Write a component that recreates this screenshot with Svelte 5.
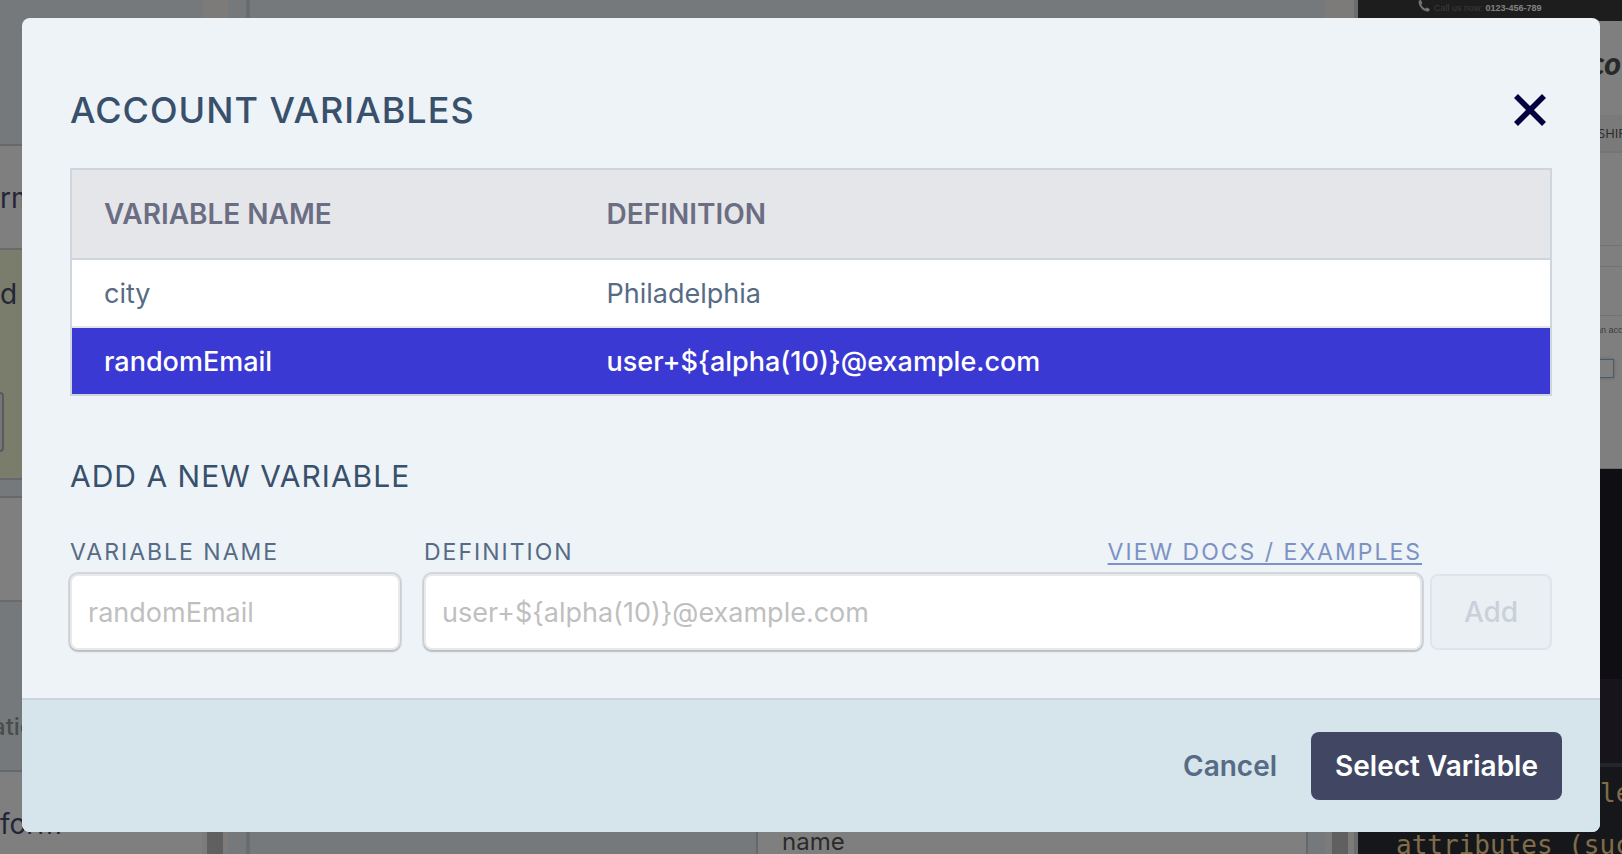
<script lang="ts">
	interface Variable {
		name: string;
		definition: string;
	}

	let variables = $state<Variable[]>([
		{ name: 'city', definition: 'Philadelphia' },
		{ name: 'randomEmail', definition: 'user+${alpha(10)}@example.com' }
	]);
	let selected = $state('randomEmail');
	let open = $state(true);
	let newName = $state('');
	let newDefinition = $state('');

	const canAdd = $derived(newName.trim() !== '' && newDefinition.trim() !== '');

	function addVariable(e: SubmitEvent) {
		e.preventDefault();
		if (!canAdd) return;
		variables.push({ name: newName.trim(), definition: newDefinition.trim() });
		selected = newName.trim();
		newName = '';
		newDefinition = '';
	}

	function close() {
		open = false;
	}
</script>

<div class="page">
	<!-- Editor behind the modal -->
	<div class="editor" aria-hidden="true">
		<div class="steps">
			<div class="step-head"></div>
			<div class="step">rm</div>
			<div class="step active">
				<span>d</span>
				<div class="step-field"></div>
			</div>
			<div class="step-gap"></div>
			<div class="step"></div>
			<div class="step-note">ation</div>
			<div class="step last">form</div>
		</div>
		<div class="scroll-lane"><div class="thumb"></div></div>
		<div class="gutter"></div>
		<div class="canvas">
			<div class="canvas-card">name</div>
		</div>
		<div class="scroll-lane right"><div class="thumb"></div></div>
		<div class="preview">
			<div class="shop-top">
				<svg width="12" height="12" viewBox="0 0 12 12">
					<path d="M1 0.5 L3 0 L4.4 3.2 L3.2 4.4 C3.8 6.2 5.4 8 7.4 8.7 L8.7 7.5 L11.7 9 L11.2 11 C9.8 12.2 6.4 11.4 3.8 8.8 C1 6 0 2.6 1 0.5 Z" fill="#e8e8e8" />
				</svg>
				<span>Call us now: <b>0123-456-789</b></span>
			</div>
			<div class="shop-logo">co</div>
			<div class="shop-nav">SHIRTS</div>
			<div class="shop-row tall"></div>
			<div class="shop-row"></div>
			<div class="shop-row mid"></div>
			<div class="shop-form">
				<span>an account</span>
				<div class="shop-input"></div>
			</div>
			<div class="console"></div>
			<div class="console-tabs"></div>
			<div class="code">
				<div class="code-line indent">le</div>
				<div class="code-line">attributes (such</div>
			</div>
		</div>
	</div>
	<div class="overlay"></div>

	{#if open}
		<div class="modal" role="dialog" aria-modal="true" aria-labelledby="modal-title">
			<div class="modal-body">
				<header class="modal-header">
					<h1 id="modal-title">ACCOUNT VARIABLES</h1>
					<button class="close-btn" type="button" aria-label="Close" onclick={close}>
						<svg width="34" height="34" viewBox="0 0 34 34">
							<path d="M3 3 L31 31 M31 3 L3 31" stroke="#03003f" stroke-width="5.6" fill="none" />
						</svg>
					</button>
				</header>

				<table class="var-table">
					<thead>
						<tr>
							<th class="col-name">VARIABLE NAME</th>
							<th>DEFINITION</th>
						</tr>
					</thead>
					<tbody>
						{#each variables as variable (variable.name)}
							<tr class:selected={variable.name === selected} onclick={() => (selected = variable.name)}>
								<td>{variable.name}</td>
								<td>{variable.definition}</td>
							</tr>
						{/each}
					</tbody>
				</table>

				<h2>ADD A NEW VARIABLE</h2>

				<form class="add-form" onsubmit={addVariable}>
					<div class="field name-field">
						<label for="var-name">VARIABLE NAME</label>
						<input id="var-name" type="text" placeholder="randomEmail" bind:value={newName} />
					</div>
					<div class="field definition-field">
						<div class="label-row">
							<label for="var-definition">DEFINITION</label>
							<a href="#docs">VIEW DOCS / EXAMPLES</a>
						</div>
						<input
							id="var-definition"
							type="text"
							placeholder={'user+${alpha(10)}@example.com'}
							bind:value={newDefinition}
						/>
					</div>
					<button class="add-btn" type="submit" disabled={!canAdd}>Add</button>
				</form>
			</div>

			<footer class="modal-footer">
				<button class="cancel-btn" type="button" onclick={close}>Cancel</button>
				<button class="select-btn" type="button" onclick={close}>Select Variable</button>
			</footer>
		</div>
	{/if}
</div>

<style>
	:global(body) {
		background: #7f7f7f;
	}

	.page {
		position: relative;
		min-height: 100vh;
		box-sizing: border-box;
		padding: 18px 22px 22px;
		overflow: hidden;
		font-family: Inter, 'Liberation Sans', sans-serif;
	}

	.page * {
		box-sizing: border-box;
	}

	/* Editor */
	.editor {
		position: absolute;
		inset: 0;
		display: grid;
		grid-template-columns: 202px 26px 22px 1fr 33px 264px;
		grid-template-rows: 100%;
		background: #eaf2f6;
		overflow: hidden;
	}

	.overlay {
		position: absolute;
		inset: 0;
		background: rgba(0, 0, 0, 0.5);
	}

	.steps {
		display: flex;
		flex-direction: column;
		min-width: 0;
		font-size: 28px;
		color: #484c70;
	}

	.step-head {
		height: 146px;
		border-bottom: 2px solid #ccd3d8;
	}

	.step {
		height: 104px;
		background: #fff;
		border-bottom: 2px solid #d5d5d5;
		line-height: 104px;
	}

	.step.active {
		height: 230px;
		background: #f7fbd8;
		border-color: #ccd3d8;
		line-height: 88px;
	}

	.step-field {
		width: 4px;
		height: 60px;
		margin-top: 54px;
		background: #ecebf2;
		border: 2px solid #b4b4b4;
		border-left: 0;
		border-radius: 0 6px 6px 0;
	}

	.step.active span {
		display: block;
		height: 88px;
	}

	.step-gap {
		height: 18px;
		border-bottom: 2px solid #ccd3d8;
	}

	.step-note {
		height: 170px;
		padding-top: 110px;
		border-bottom: 2px solid #ccd3d8;
		font-size: 24px;
		font-weight: 500;
		line-height: 30px;
		text-indent: -8px;
		color: #94999c;
	}

	.step.last {
		flex: 1;
		min-height: 0;
		border: 0;
	}

	.scroll-lane {
		display: flex;
		align-items: flex-end;
		justify-content: center;
		background: #faf6f4;
	}

	.thumb {
		width: 16px;
		height: 50%;
		background: #c0c0c0;
	}

	.gutter {
		border-right: 4px solid #d4dade;
	}

	.canvas {
		display: flex;
		flex-direction: column;
		justify-content: flex-end;
		align-items: flex-end;
		padding-right: 17px;
	}

	.canvas-card {
		width: 552px;
		padding: 44px 24px 0;
		background: #fff;
		border: 2px solid #ccd3d8;
		border-width: 0 2px;
		font-size: 24px;
		line-height: 24px;
		color: #565656;
	}

	.scroll-lane.right {
		border-right: 4px solid #d4dade;
	}

	.preview {
		display: flex;
		flex-direction: column;
		background: #fff;
		overflow: hidden;
	}

	.shop-top {
		display: flex;
		gap: 4px;
		height: 21px;
		padding-left: 60px;
		background: #3a3a3a;
		font: 9px/16px 'Liberation Sans', sans-serif;
		color: #777;
	}

	.shop-top b {
		color: #fff;
	}

	.shop-logo {
		height: 94px;
		padding: 22px 0 0 232px;
		font: italic 900 32px/40px Lato, sans-serif;
		color: #505050;
	}

	.shop-nav {
		height: 38px;
		padding-left: 240px;
		background: #f4f4f4;
		border-bottom: 2px solid #ebebeb;
		font: 500 13px/36px 'Open Sans', sans-serif;
		color: #505050;
	}

	.shop-row {
		height: 21px;
		border-bottom: 1px solid #e4e4e4;
	}

	.shop-row.tall {
		height: 93px;
	}

	.shop-row.mid {
		height: 49px;
	}

	.shop-form {
		height: 153px;
		padding-top: 8px;
		border-bottom: 1px solid #d5d5d5;
		font: 9px/12px 'Liberation Sans', sans-serif;
		color: #777;
	}

	.shop-form span {
		display: block;
		padding-left: 238px;
		white-space: nowrap;
	}

	.shop-input {
		width: 256px;
		height: 19px;
		margin-top: 23px;
		border: 1px solid #98b4ca;
		box-shadow: 0 0 4px #b8cad8;
	}

	.console {
		height: 210px;
		background: #1e1c26;
	}

	.console-tabs {
		height: 88px;
		background: #2e2836;
		border-bottom: 4px solid #464a54;
	}

	.code {
		flex: 1;
		min-height: 0;
		background: #2a2f36;
		font: 26px/52px 'DejaVu Sans Mono', monospace;
		color: #ffda94;
	}

	.code-line {
		padding-left: 38px;
		white-space: pre;
	}

	.code-line.indent {
		padding-left: 242px;
	}

	/* Modal */
	.modal {
		position: relative;
		border-radius: 8px;
		overflow: hidden;
		background: #edf3f7;
		color: #566b85;
	}

	.modal-body {
		padding: 64px 48px 48px;
	}

	.modal-header {
		display: flex;
		align-items: center;
		justify-content: space-between;
		margin-bottom: 30px;
		padding-right: 5px;
	}

	h1,
	h2 {
		margin: 0;
		font-weight: 500;
		color: #38506b;
	}

	h1 {
		font-size: 36px;
		line-height: 56px;
		letter-spacing: 1px;
	}

	h2 {
		margin: 60px 0 40px;
		font-size: 30px;
		line-height: 40px;
		font-weight: 400;
		letter-spacing: 1px;
	}

	button {
		margin: 0;
		font-family: inherit;
		font-size: 28px;
		cursor: pointer;
	}

	.close-btn {
		display: flex;
		padding: 0;
		background: none;
		border: 0;
	}

	.var-table {
		width: 100%;
		table-layout: fixed;
		border-collapse: separate;
		border-spacing: 0;
		border: 2px solid #cfd5dc;
		background: #fff;
		font-size: 27px;
		line-height: 34px;
	}

	.var-table th {
		height: 90px;
		padding: 0 32px;
		background: #e5e6ea;
		border-bottom: 2px solid #cfd5dc;
		text-align: left;
		font-size: 28px;
		font-weight: 600;
		color: #6b6e83;
	}

	.var-table .col-name {
		width: 34%;
	}

	.var-table td {
		height: 68px;
		padding: 2px 32px 0;
		border-bottom: 2px solid #e5e6ea;
		cursor: pointer;
	}

	.var-table tbody tr:last-child td {
		height: 66px;
		border-bottom: 0;
	}

	.var-table .selected td {
		background: #3b39d3;
		font-weight: 500;
		color: #fff;
	}

	.add-form {
		display: flex;
		align-items: flex-end;
	}

	.field {
		display: flex;
		flex-direction: column;
		gap: 6px;
		min-width: 0;
	}

	.name-field {
		flex: 0 0 330px;
		margin-right: 24px;
	}

	.definition-field {
		flex: 1;
		margin-right: 8px;
	}

	.label-row {
		display: flex;
		justify-content: space-between;
	}

	label,
	.label-row a {
		font-size: 23px;
		line-height: 32px;
		letter-spacing: 2px;
	}

	.label-row a {
		color: #7d92c4;
		text-decoration-thickness: 2px;
		text-underline-offset: 3px;
		text-decoration-skip-ink: none;
	}

	input {
		width: 100%;
		height: 76px;
		padding: 0 16px;
		background: #fff;
		border: 2px solid #e9e9e9;
		border-radius: 8px;
		box-shadow:
			0 0 0 2px rgba(60, 66, 87, 0.16),
			0 2px 2px rgba(0, 0, 0, 0.12);
		outline: none;
		font-family: inherit;
		font-size: 27px;
		color: #566b85;
	}

	input::placeholder {
		color: #bfbfbf;
		opacity: 1;
	}

	.add-btn {
		width: 122px;
		height: 76px;
		background: #e9eff3;
		border: 2px solid #dfe4eb;
		border-radius: 8px;
		font-weight: 500;
		color: #566b85;
	}

	.add-btn:disabled {
		color: #c8d1da;
		cursor: default;
	}

	.modal-footer {
		display: flex;
		justify-content: flex-end;
		gap: 10px;
		padding: 32px 38px;
		background: #d6e4ec;
		border-top: 2px solid #cdd4db;
	}

	.cancel-btn,
	.select-btn {
		height: 68px;
		padding: 0 24px;
		border: 0;
		border-radius: 8px;
		font-weight: 600;
	}

	.cancel-btn {
		background: none;
		color: #566b85;
	}

	.select-btn {
		background: #414763;
		color: #fff;
	}
</style>
